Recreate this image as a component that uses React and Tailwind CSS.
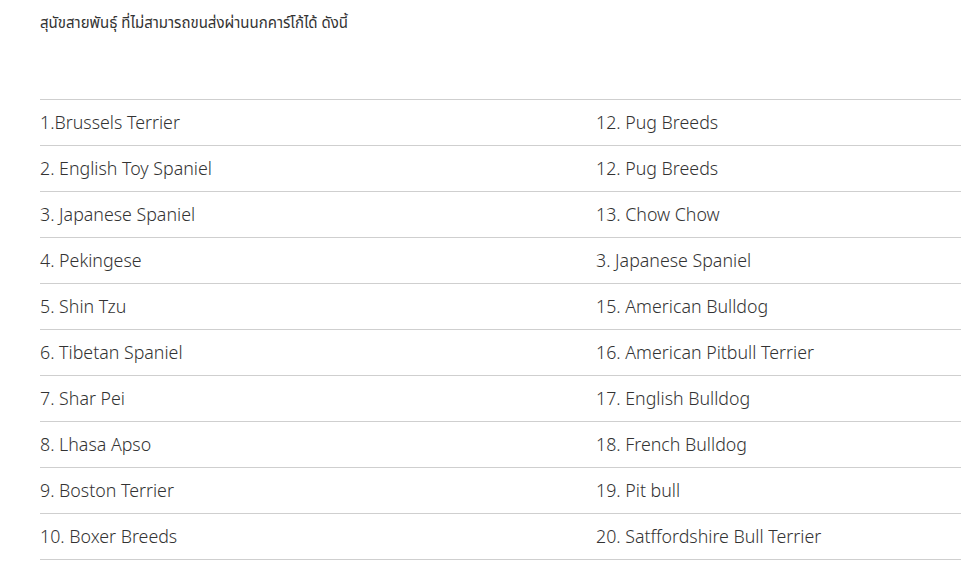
import React from "react";

const rows = [
  ["1.Brussels Terrier", "12. Pug Breeds"],
  ["2. English Toy Spaniel", "12. Pug Breeds"],
  ["3. Japanese Spaniel", "13. Chow Chow"],
  ["4. Pekingese", "3. Japanese Spaniel"],
  ["5. Shin Tzu", "15. American Bulldog"],
  ["6. Tibetan Spaniel", "16. American Pitbull Terrier"],
  ["7. Shar Pei", "17. English Bulldog"],
  ["8. Lhasa Apso", "18. French Bulldog"],
  ["9. Boston Terrier", "19. Pit bull"],
  ["10. Boxer Breeds", "20. Satffordshire Bull Terrier"],
];

export default function App() {
  return (
    <div
      className="min-h-[586px] bg-white text-[#333] overflow-hidden"
      style={{ fontFamily: '"Noto Sans", "Noto Sans Thai", sans-serif' }}
    >
      <div className="pl-10 pt-[10px]">
        <p className="text-[15px] leading-[24px] text-[#333]">
          สุนัขสายพันธุ์ ที่ไม่สามารถขนส่งผ่านนกคาร์โก้ได้ ดังนี้
        </p>
        <table className="mt-[65px] w-[921px] border-collapse">
          <tbody>
            {rows.map((r, i) => (
              <tr key={i} className="border-y border-[#cfcfcf]">
                <td className="w-[556px] h-[46px] p-0 text-[17.8px] font-light">
                  {r[0]}
                </td>
                <td className="h-[46px] p-0 text-[17.8px] font-light">{r[1]}</td>
              </tr>
            ))}
          </tbody>
        </table>
      </div>
    </div>
  );
}
